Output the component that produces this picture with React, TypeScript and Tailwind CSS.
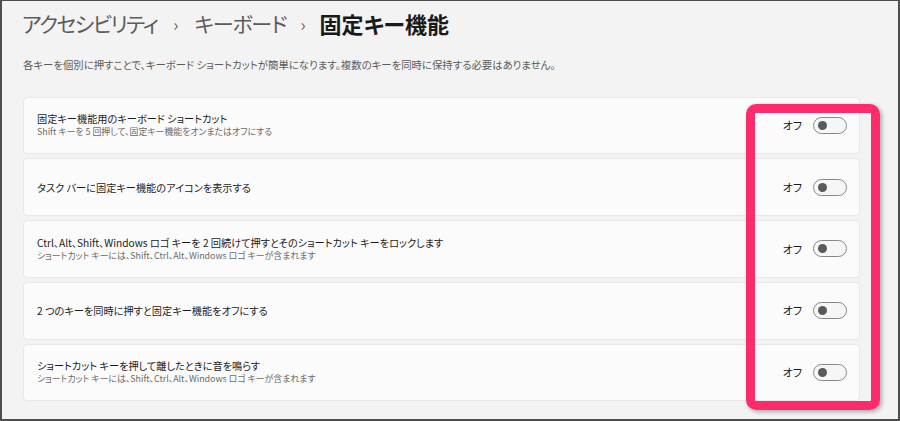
const settings = [
  {
    title: "固定キー機能用のキーボード ショートカット",
    sub: "Shift キーを 5 回押して、固定キー機能をオンまたはオフにする",
  },
  { title: "タスク バーに固定キー機能のアイコンを表示する" },
  {
    title: "Ctrl、Alt、Shift、Windows ロゴ キーを 2 回続けて押すとそのショートカット キーをロックします",
    sub: "ショートカット キーには、Shift、Ctrl、Alt、Windows ロゴ キーが含まれます",
  },
  { title: "2 つのキーを同時に押すと固定キー機能をオフにする" },
  {
    title: "ショートカット キーを押して離したときに音を鳴らす",
    sub: "ショートカット キーには、Shift、Ctrl、Alt、Windows ロゴ キーが含まれます",
  },
];

const Toggle = () => (
  <div className="flex items-center gap-[11px]">
    <span className="text-[11px] text-[#1b1b1b]">オフ</span>
    <div className="flex h-[17px] w-[34px] items-center rounded-full border border-[#878787] bg-[#f6f6f6] pl-[4px]">
      <div className="h-[9px] w-[9px] rounded-full bg-[#5a5a5a]" />
    </div>
  </div>
);

const SettingRow = ({ title, sub }: { title: string; sub?: string }) => (
  <div className="flex h-[57.75px] items-center justify-between rounded-[4px] border border-[#e8e8e8] bg-[#fbfbfb] pl-[13px] pr-[12px]">
    <div className="flex flex-col">
      <p className="text-[10.2px] leading-[13px] text-[#1b1b1b]">{title}</p>
      {sub && <p className="text-[8.9px] leading-[13px] text-[#6a6a6a]">{sub}</p>}
    </div>
    <Toggle />
  </div>
);

export default function App() {
  return (
    <div className="relative h-[421px] w-[900px] overflow-hidden border-x-2 border-b-2 border-t border-[#4e4e4e] bg-[#f3f3f3] pl-[20px] pr-[38px] font-['Noto_Sans_CJK_JP',sans-serif] [font-feature-settings:'palt']">
      <h1 className="flex h-[45px] items-center text-[#5c5c5c]">
        <span className="text-[21px] tracking-[-1.5px]">アクセシビリティ</span>
        <span className="mx-[16px] text-[17px]">›</span>
        <span className="text-[21px] tracking-[-1.2px]">キーボード</span>
        <span className="mx-[14px] text-[17px]">›</span>
        <span className="text-[22px] font-semibold text-[#1a1a1a]">固定キー機能</span>
      </h1>
      <p className="mt-[11px] pl-[1px] text-[10.4px] text-[#5c5c5c]">
        各キーを個別に押すことで、キーボード ショートカットが簡単になります。複数のキーを同時に保持する必要はありません。
      </p>
      <div className="mt-[24px] flex flex-col gap-[4px] pl-[1px]">
        {settings.map((s) => (
          <SettingRow key={s.title} {...s} />
        ))}
      </div>
      <div className="pointer-events-none absolute left-[744px] top-[103px] h-[306px] w-[134px] rounded-[10px] border-[9px] border-[#fe2b6b] shadow-[2px_2px_4px_rgba(0,0,0,0.3)]" />
    </div>
  );
}
